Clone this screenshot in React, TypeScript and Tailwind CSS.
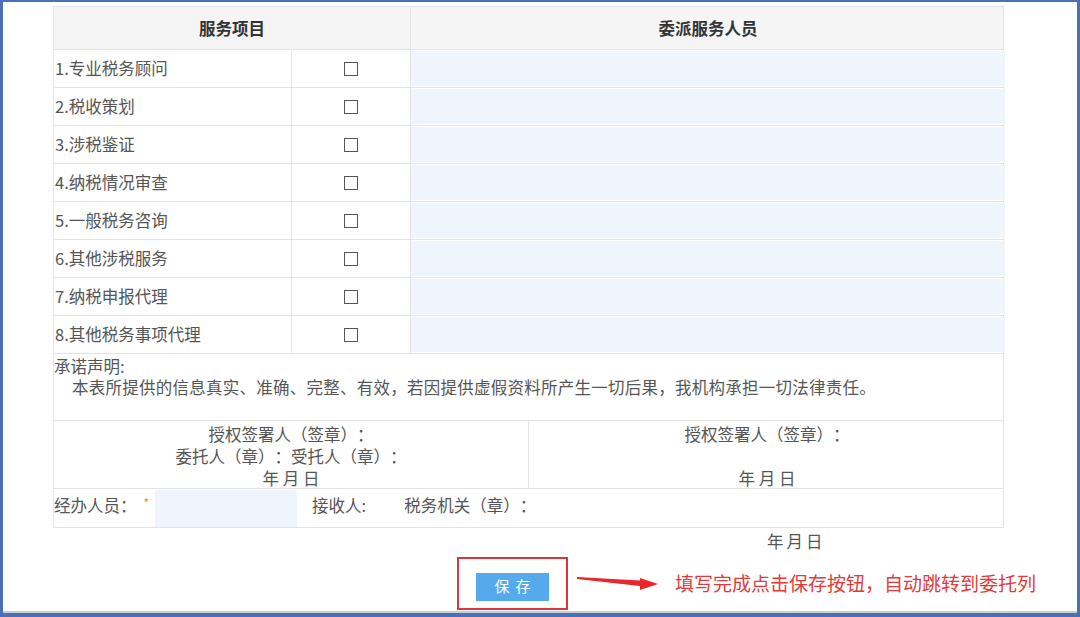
const items = [
  "1.专业税务顾问",
  "2.税收策划",
  "3.涉税鉴证",
  "4.纳税情况审查",
  "5.一般税务咨询",
  "6.其他涉税服务",
  "7.纳税申报代理",
  "8.其他税务事项代理",
];

const font = { fontFamily: '"Microsoft YaHei", "Noto Sans CJK SC", "Noto Sans", sans-serif' };

const Checkbox = () => (
  <span className="inline-block w-[14px] h-[14px] border border-[#555] bg-white" />
);

const Arrow = () => (
  <svg width="82" height="22" viewBox="0 0 82 22" className="ml-[9px]">
    <polygon points="0,4 63,7.5 63,5 81,11 63,17 63,13 0,6" fill="#e8262b" />
  </svg>
);

export default function App() {
  return (
    <div
      className="w-[1080px] h-[617px] bg-white border-t-2 border-l-[3px] border-r-[3px] border-b-[4px] border-[#4a70b6] overflow-hidden flex flex-col text-[16.5px] text-[#555] [text-spacing-trim:space-all]"
      style={font}
    >
      <div className="flex-1 flex flex-col border-b-2 border-[#c9cdd4]">
        <div className="ml-[50px] mt-[4px] w-[951px]">
          {/* header */}
          <div className="grid grid-cols-[357px_594px] h-[44px] bg-[#f5f5f5] border border-[#e4e4e4]">
            <div className="flex items-center justify-center font-bold text-[#333] border-r border-[#e4e4e4]">服务项目</div>
            <div className="flex items-center justify-center font-bold text-[#333]">委派服务人员</div>
          </div>
          {/* rows */}
          {items.map((name) => (
            <div key={name} className="grid grid-cols-[238px_119px_594px] h-[38px] border-x border-b border-[#e4e4e4]">
              <div className="flex items-center pl-[1px] border-r border-[#e4e4e4] whitespace-nowrap">{name}</div>
              <div className="flex items-center justify-center border-r border-[#e4e4e4]">
                <Checkbox />
              </div>
              <div className="bg-[#eef5fd] my-[1px]" />
            </div>
          ))}
          {/* declaration */}
          <div className="h-[66px] border-x border-[#e4e4e4] leading-[21px] pt-[2px]">
            <div>承诺声明:</div>
            <div className="pl-[18px] whitespace-nowrap tracking-[0.25px]">
              本表所提供的信息真实、准确、完整、有效，若因提供虚假资料所产生一切后果，我机构承担一切法律责任。
            </div>
          </div>
          {/* signature table */}
          <div className="grid grid-cols-[475px_476px] h-[69px] border border-[#e4e4e4] leading-[22px]">
            <div className="flex flex-col items-center pt-[2px] border-r border-[#e4e4e4]">
              <div>授权签署人（签章）：</div>
              <div>委托人（章）：受托人（章）：</div>
              <div>年 月 日</div>
            </div>
            <div className="flex flex-col items-center pt-[2px]">
              <div>授权签署人（签章）：</div>
              <div>&nbsp;</div>
              <div>年 月 日</div>
            </div>
          </div>
          {/* handler row */}
          <div className="flex h-[38px] border-x border-b border-[#e4e4e4] mt-[1px]">
            <div className="flex items-start pt-[3px] whitespace-nowrap">
              经办人员：
              <span className="text-[#f08a24] text-[12px] ml-[7px] leading-[14px] mt-[3px]">*</span>
            </div>
            <div className="w-[142px] bg-[#eef5fd] ml-[6px]" />
            <div className="pt-[3px] ml-[15px] whitespace-nowrap">接收人:</div>
            <div className="pt-[3px] ml-[38px] whitespace-nowrap">税务机关（章）：</div>
          </div>
        </div>
        <div className="pl-[764px] mt-[2px] leading-[22px] tracking-[3px]">年月日</div>
        {/* save area */}
        <div className="flex items-center ml-[454px] mt-[5px]">
          <div className="w-[111px] h-[53px] border-2 border-[#d9363e] flex items-center justify-center pt-[6px]">
            <button className="w-[73px] h-[28px] bg-[#55aaee] text-white text-[15px] tracking-[6px] pl-[6px]">
              保存
            </button>
          </div>
          <Arrow />
          <div className="ml-[16px] text-[19px] text-[#e23a3a] whitespace-nowrap">填写完成点击保存按钮，自动跳转到委托列</div>
        </div>
      </div>
    </div>
  );
}
